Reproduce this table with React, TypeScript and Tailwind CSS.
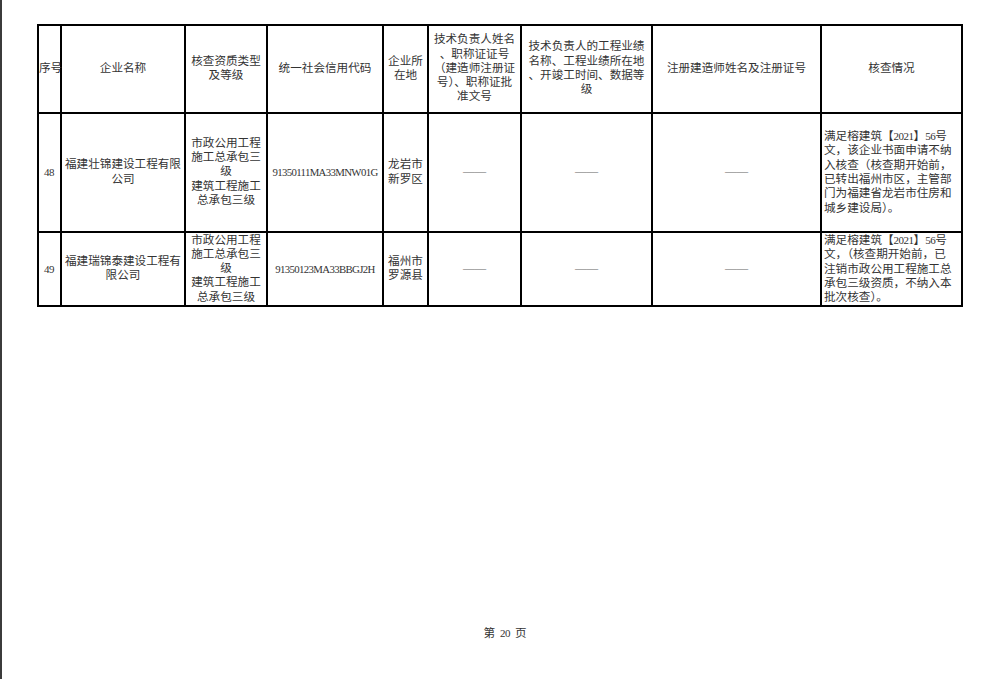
const cjk = { fontFamily: '"Liberation Serif", "Noto Sans CJK SC", serif' };

const cell = 'border-2 border-black p-0 align-middle text-center';

function Dash() {
  return <span className="text-[#666]">——</span>;
}

function Num({ children }: { children: React.ReactNode }) {
  return <span className="text-[11px] tracking-[-0.5px]">{children}</span>;
}

function Code({ children }: { children: React.ReactNode }) {
  return <span className="text-[10.8px] tracking-[-0.65px]">{children}</span>;
}

export default function App() {
  return (
    <div className="flex w-[1000px] h-[679px] bg-white text-[#333]" style={cjk}>
      <div className="w-[2px] h-full bg-[#3b3b3b]" />
      <div className="flex-1 flex flex-col pl-[35px] pt-[24px]">
        <table className="border-collapse table-fixed w-[926px] text-[11.6px] leading-[14.3px]">
          <colgroup>
            <col className="w-[23px]" />
            <col className="w-[124px]" />
            <col className="w-[82px]" />
            <col className="w-[116px]" />
            <col className="w-[45px]" />
            <col className="w-[93px]" />
            <col className="w-[131px]" />
            <col className="w-[169px]" />
            <col className="w-[141px]" />
          </colgroup>
          <thead>
            <tr className="h-[88px]">
              <th className={`${cell} font-normal whitespace-nowrap`}>序号</th>
              <th className={`${cell} font-normal`}>企业名称</th>
              <th className={`${cell} font-normal`}>
                核查资质类型
                <br />
                及等级
              </th>
              <th className={`${cell} font-normal`}>统一社会信用代码</th>
              <th className={`${cell} font-normal`}>
                企业所
                <br />
                在地
              </th>
              <th className={`${cell} font-normal whitespace-nowrap`}>
                技术负责人姓名
                <br />
                、职称证证号
                <br />
                （建造师注册证
                <br />
                号）、职称证批
                <br />
                准文号
              </th>
              <th className={`${cell} font-normal whitespace-nowrap`}>
                技术负责人的工程业绩
                <br />
                名称、工程业绩所在地
                <br />
                、开竣工时间、数据等
                <br />
                级
              </th>
              <th className={`${cell} font-normal`}>注册建造师姓名及注册证号</th>
              <th className={`${cell} font-normal`}>核查情况</th>
            </tr>
          </thead>
          <tbody>
            <tr className="h-[119px]">
              <td className={`${cell} pr-[1px]`}>
                <Num>48</Num>
              </td>
              <td className={`${cell} whitespace-nowrap`}>
                福建壮锦建设工程有限
                <br />
                公司
              </td>
              <td className={`${cell} whitespace-nowrap`}>
                市政公用工程
                <br />
                施工总承包三
                <br />
                级
                <br />
                建筑工程施工
                <br />
                总承包三级
              </td>
              <td className={cell}>
                <Code>91350111MA33MNW01G</Code>
              </td>
              <td className={`${cell} whitespace-nowrap`}>
                龙岩市
                <br />
                新罗区
              </td>
              <td className={cell}>
                <Dash />
              </td>
              <td className={cell}>
                <Dash />
              </td>
              <td className={cell}>
                <Dash />
              </td>
              <td className={`${cell} text-left pl-[2px] whitespace-nowrap`}>
                满足榕建筑【<Num>2021</Num>】<Num>56</Num>号
                <br />
                文，该企业书面申请不纳
                <br />
                入核查（核查期开始前，
                <br />
                已转出福州市区，主管部
                <br />
                门为福建省龙岩市住房和
                <br />
                城乡建设局）。
              </td>
            </tr>
            <tr className="h-[73px]">
              <td className={`${cell} pr-[1px]`}>
                <Num>49</Num>
              </td>
              <td className={`${cell} whitespace-nowrap`}>
                福建瑞锦泰建设工程有
                <br />
                限公司
              </td>
              <td className={`${cell} whitespace-nowrap`}>
                市政公用工程
                <br />
                施工总承包三
                <br />
                级
                <br />
                建筑工程施工
                <br />
                总承包三级
              </td>
              <td className={cell}>
                <Code>91350123MA33BBGJ2H</Code>
              </td>
              <td className={`${cell} whitespace-nowrap`}>
                福州市
                <br />
                罗源县
              </td>
              <td className={cell}>
                <Dash />
              </td>
              <td className={cell}>
                <Dash />
              </td>
              <td className={cell}>
                <Dash />
              </td>
              <td className={`${cell} text-left pl-[2px] whitespace-nowrap`}>
                满足榕建筑【<Num>2021</Num>】<Num>56</Num>号
                <br />
                文，（核查期开始前，已
                <br />
                注销市政公用工程施工总
                <br />
                承包三级资质，不纳入本
                <br />
                批次核查）。
              </td>
            </tr>
          </tbody>
        </table>
        <div className="flex-1" />
        <div className="w-[926px] pb-[38px] pl-[10px] text-center text-[11.6px] leading-[14px]">
          第<span className="mx-[5px]">
            <Num>20</Num>
          </span>页
        </div>
      </div>
    </div>
  );
}
